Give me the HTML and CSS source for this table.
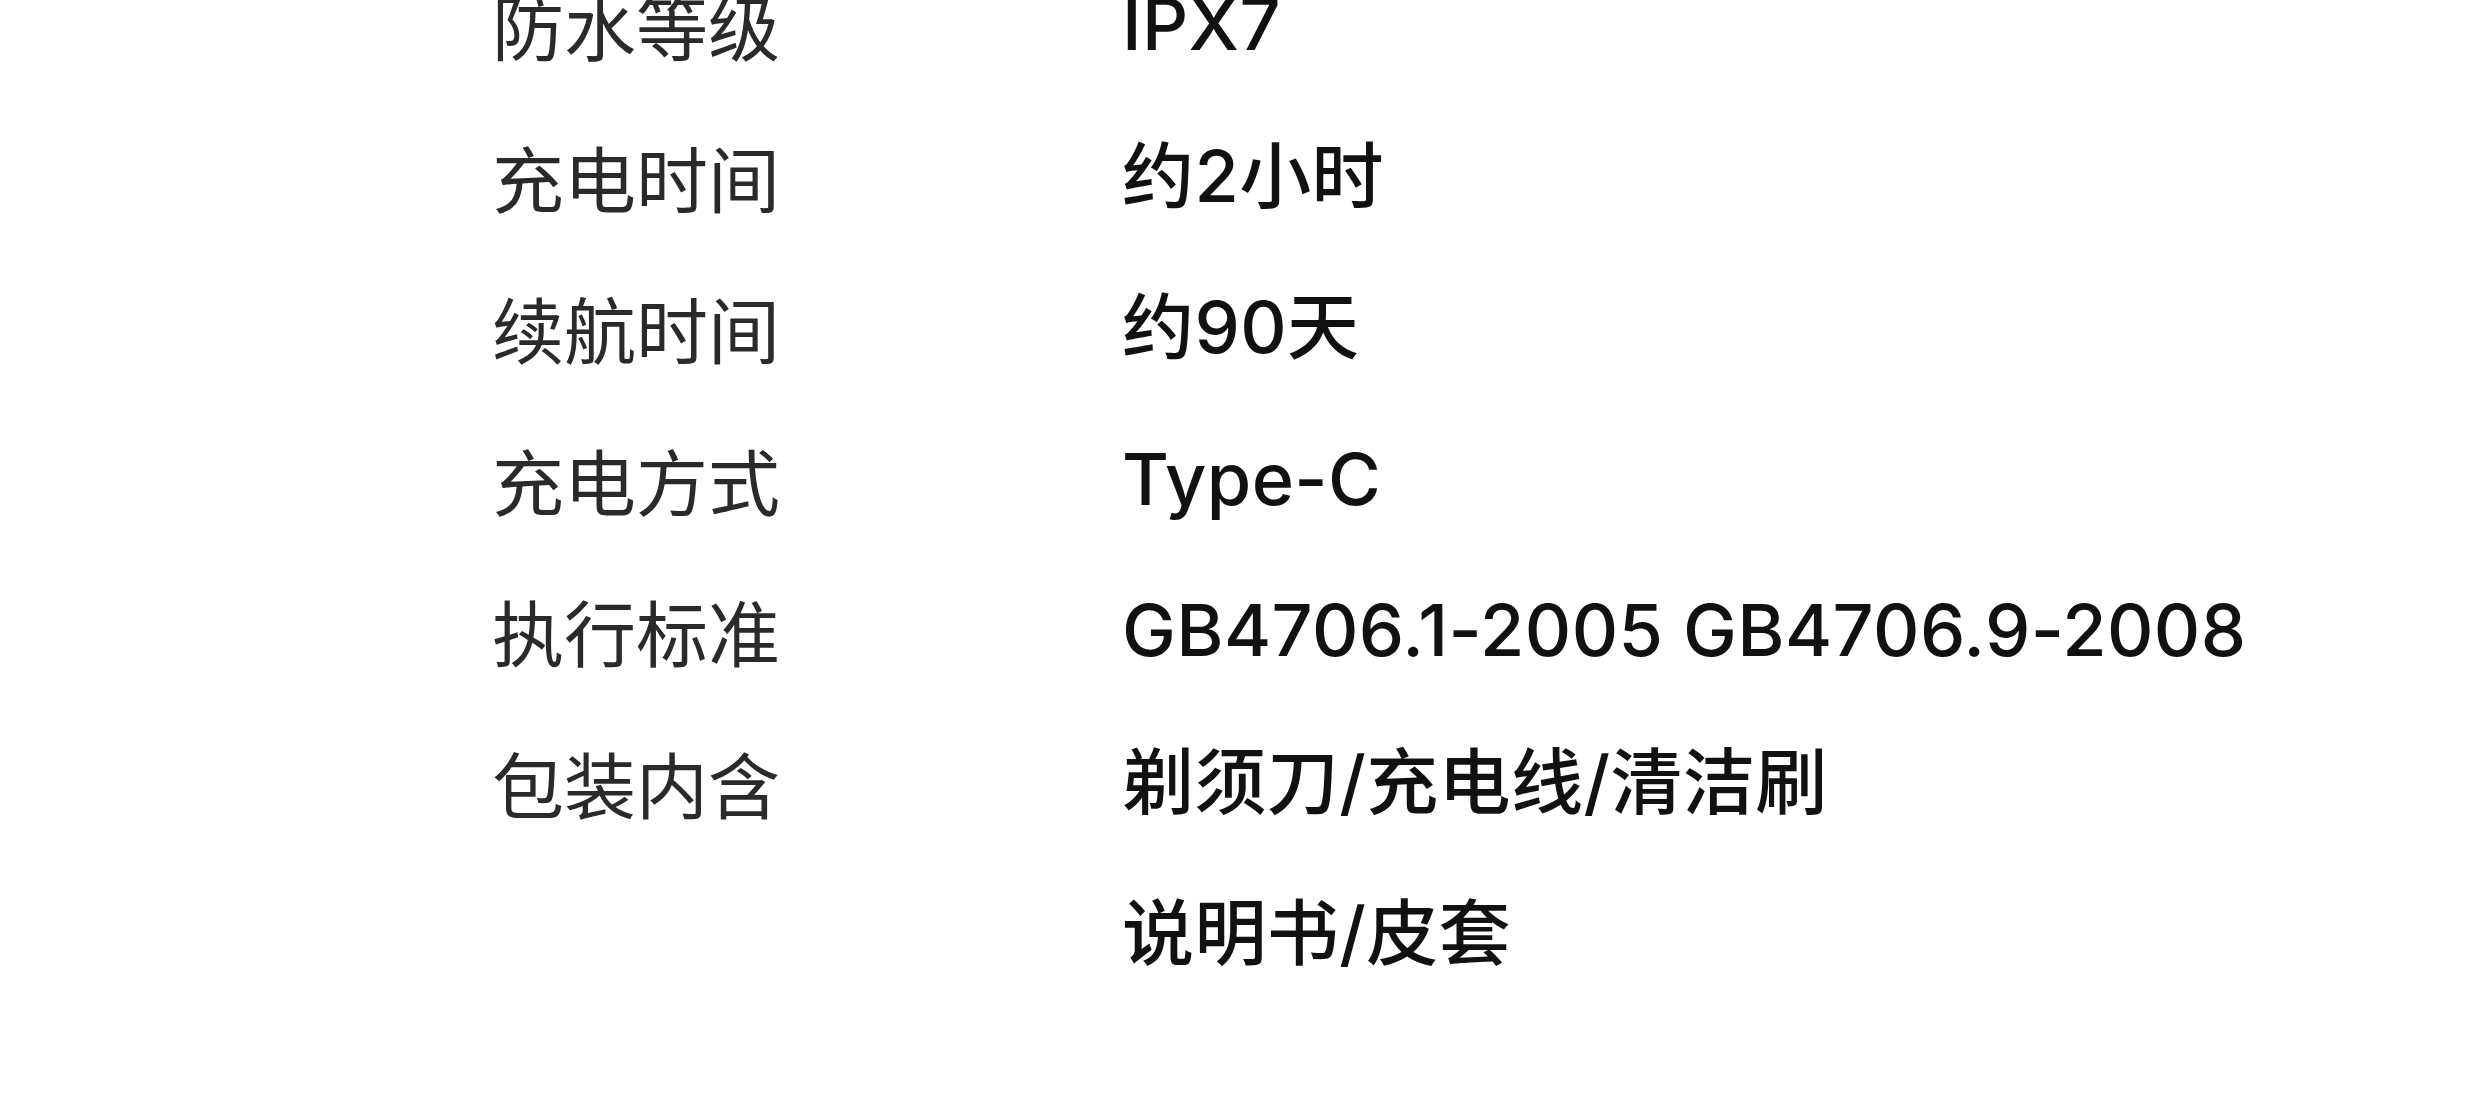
FILE: index.html
```html
<!DOCTYPE html>
<html lang="zh-CN">
<head>
  <meta charset="UTF-8" />
  <meta name="viewport" content="width=device-width, initial-scale=1.0"/>
  <title>产品参数</title>
  <link rel="stylesheet" href="styles.css">
</head>
<body>

  <div class="spec-list">
    <div class="spec-row">
      <div class="spec-label">防水等级</div>
      <div class="spec-value">IPX7</div>
    </div>
    <div class="spec-row">
      <div class="spec-label">充电时间</div>
      <div class="spec-value">约2小时</div>
    </div>
    <div class="spec-row">
      <div class="spec-label">续航时间</div>
      <div class="spec-value">约90天</div>
    </div>
    <div class="spec-row">
      <div class="spec-label">充电方式</div>
      <div class="spec-value">Type-C</div>
    </div>
    <div class="spec-row">
      <div class="spec-label">执行标准</div>
      <div class="spec-value">GB4706.1-2005 GB4706.9-2008</div>
    </div>
    <div class="spec-row">
      <div class="spec-label">包装内含</div>
      <div class="spec-value">剃须刀/充电线/清洁刷<br>说明书/皮套</div>
    </div>
  </div>

</body>
</html>
```

FILE: styles.css
```css
body {
  margin: 0;
  background: #fff;
  font-family: "Noto Sans CJK SC", sans-serif;
  overflow: hidden;
}

.spec-list {
  margin-top: -52px;
  padding-left: 492px;
}

.spec-row {
  display: grid;
  grid-template-columns: 630px 1fr;
  font-size: 72px;
  line-height: 151.5px;
}

.spec-label {
  color: #2a2a2a;
  font-weight: 400;
}

.spec-value {
  color: #111;
  font-family: Inter, "Noto Sans CJK SC", sans-serif;
  font-weight: 500;
  letter-spacing: 0.4px;
}
```
